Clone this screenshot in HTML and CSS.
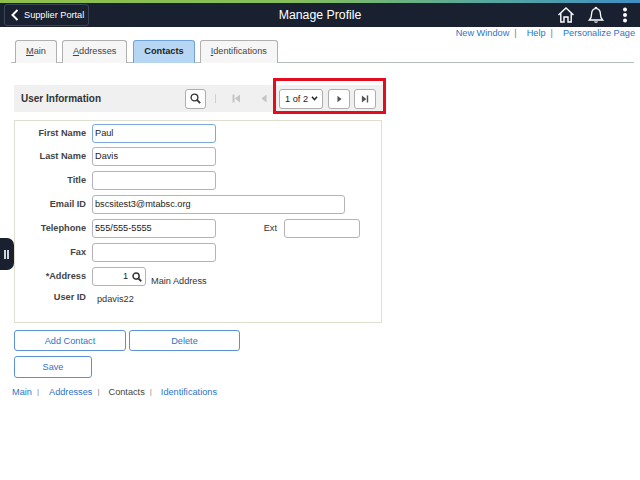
FILE: index.html
```html
<!DOCTYPE html>
<html lang="en">
<head>
<meta charset="utf-8">
<title>Manage Profile</title>
<link rel="stylesheet" href="styles.css">
</head>
<body>
<div class="strip"></div>
<header class="topbar">
  <div class="back-wrap">
    <a class="back">
      <svg class="chev" width="8" height="12" viewBox="0 0 8 12"><path d="M6.5 1 L1.5 6 L6.5 11" fill="none" stroke="#fff" stroke-width="2"/></svg>
      <span>Supplier Portal</span>
    </a>
  </div>
  <div class="title">Manage Profile</div>
  <div class="top-icons">
    <svg class="ic-home" width="18" height="18" viewBox="0 0 18 18"><path d="M1.5 9 L9 2 L16.5 9 M3.8 7.5 V16 H7 V11 H11 V16 H14.2 V7.5" fill="none" stroke="#fff" stroke-width="1.4"/></svg>
    <svg class="ic-bell" width="16" height="18" viewBox="0 0 16 18"><path d="M8 1.5 C8 1.5 8.8 1.5 8.8 2.6 C11.4 3.2 12.4 5.2 12.4 8 C12.4 11 13 12.4 14.6 14 H1.4 C3 12.4 3.6 11 3.6 8 C3.6 5.2 4.6 3.2 7.2 2.6 C7.2 1.5 8 1.5 8 1.5 Z" fill="none" stroke="#fff" stroke-width="1.3"/><path d="M6 15.5 C6.4 17.2 9.6 17.2 10 15.5 Z" fill="#fff"/></svg>
    <svg width="6" height="16" viewBox="0 0 6 16"><circle cx="3" cy="2.5" r="2" fill="#fff"/><circle cx="3" cy="8" r="2" fill="#fff"/><circle cx="3" cy="13.5" r="2" fill="#fff"/></svg>
  </div>
</header>
<nav class="links">
  <a>New Window</a><i>|</i><a>Help</a><i>|</i><a>Personalize Page</a>
</nav>
<div class="tabs">
  <div class="tab"><u>M</u>ain</div>
  <div class="tab"><u>A</u>ddresses</div>
  <div class="tab active">Contacts</div>
  <div class="tab"><u>I</u>dentifications</div>
</div>
<main class="content">
  <section class="scrollbar">
    <h2>User Information</h2>
    <div class="tools">
      <button class="iconbtn search">
        <svg width="11" height="11" viewBox="0 0 13 13"><circle cx="5.3" cy="5.3" r="4" fill="none" stroke="#333" stroke-width="1.6"/><path d="M8.2 8.2 L12 12" stroke="#333" stroke-width="2.2"/></svg>
      </button>
      <span class="sep"></span>
      <svg class="nav-first" width="9" height="9" viewBox="0 0 9 9"><rect x="0.5" y="0.5" width="2" height="8" fill="#c4c4c4"/><path d="M8 0.5 V8.5 L3 4.5 Z" fill="#c4c4c4"/></svg>
      <svg class="nav-prev" width="6" height="9" viewBox="0 0 6 9"><path d="M5.5 0.5 V8.5 L0.5 4.5 Z" fill="#c4c4c4"/></svg>
      <div class="select"><span>1 of 2</span>
        <svg width="7" height="5" viewBox="0 0 8 6"><path d="M1 1 L4 4.4 L7 1" fill="none" stroke="#222" stroke-width="1.8"/></svg>
      </div>
      <button class="iconbtn">
        <svg width="5" height="8" viewBox="0 0 6 9"><path d="M0.5 0.5 V8.5 L5.5 4.5 Z" fill="#555"/></svg>
      </button>
      <button class="iconbtn">
        <svg width="8" height="8" viewBox="0 0 9 9"><path d="M1 0.5 V8.5 L6 4.5 Z" fill="#555"/><rect x="6.5" y="0.5" width="1.6" height="8" fill="#555"/></svg>
      </button>
    </div>
    <div class="highlight"></div>
  </section>
  <section class="panel">
    <div class="row"><label>First Name</label><div class="input focus">Paul</div></div>
    <div class="row"><label>Last Name</label><div class="input">Davis</div></div>
    <div class="row"><label>Title</label><div class="input"></div></div>
    <div class="row"><label>Email ID</label><div class="input wide">bscsitest3@mtabsc.org</div></div>
    <div class="row"><label>Telephone</label><div class="input">555/555-5555</div><label class="ext">Ext</label><div class="input small"></div></div>
    <div class="row"><label>Fax</label><div class="input"></div></div>
    <div class="row"><label>*Address</label>
      <div class="input lookup"><span>1</span>
        <svg width="10" height="10" viewBox="0 0 13 13"><circle cx="5.3" cy="5.3" r="4" fill="none" stroke="#333" stroke-width="1.9"/><path d="M8.2 8.2 L12 12" stroke="#333" stroke-width="2.4"/></svg>
      </div>
      <span class="addr">Main Address</span>
    </div>
    <div class="row userid"><label>User ID</label><span class="val">pdavis22</span></div>
  </section>
  <div class="btns first"><button class="btn big">Add Contact</button><button class="btn big">Delete</button></div>
  <div class="btns"><button class="btn">Save</button></div>
</main>
<nav class="bottom">
  <a>Main</a><i>|</i><a>Addresses</a><i>|</i><span>Contacts</span><i>|</i><a>Identifications</a>
</nav>
<div class="handle"><b></b><b></b></div>
</body>
</html>
```
FILE: styles.css
```css
* { box-sizing: border-box; }
html, body { margin: 0; padding: 0; }
body { width: 640px; height: 480px; position: relative; overflow: hidden; background: #fff; font-family: "Liberation Sans", Arial, sans-serif; font-size: 9.2px; color: #333; }
.strip { height: 3px; background: linear-gradient(90deg, #8fc04a 0%, #86bf5a 45%, #58a89c 75%, #3f8fc4 100%); }
.topbar { height: 24px; background: #19202f; display: flex; align-items: center; justify-content: space-between; position: relative; padding: 0 12px 0 4px; }
.back-wrap { display: flex; }
.back { display: flex; align-items: center; gap: 5px; width: 85px; height: 22px; padding-left: 6px; border: 1px solid #3b4456; border-radius: 3px; color: #fff; font-size: 9.2px; white-space: nowrap; }
.title { position: absolute; left: 0; right: 0; text-align: center; color: #fff; font-size: 12.3px; top: 4px; line-height: 16px; pointer-events: none; }
.top-icons { display: flex; align-items: center; }
.ic-home { margin-right: 13px; }
.ic-bell { margin-right: 18px; }
.links { height: 13px; display: flex; justify-content: flex-end; padding-right: 5px; line-height: 12px; font-size: 9.2px; color: #2e74c9; }
.links a { color: #2e74c9; }
.links i { font-style: normal; color: #777; margin: 0 10px 0 5px; }
.tabs { display: flex; gap: 5px; margin: 0 6px 0 11px; padding: 0 0 0 4px; height: 23px; border-bottom: 1px solid #b5bcbc; }
.tab { height: 23px; padding: 0 10px; border: 1px solid #b0b0b0; border-bottom: none; border-radius: 3px 3px 0 0; background: #f6f6f6; color: #444; font-size: 9.2px; line-height: 21px; }
.tab u { text-decoration: underline; }
.tab.active { background: #b7d6f3; border-color: #6fa3d8; font-weight: bold; color: #222; margin-left: 1px; }
.content { padding: 22px 0 0 14px; }
.scrollbar { width: 371px; height: 27px; background: #f0f0f0; display: flex; align-items: center; justify-content: space-between; position: relative; padding: 0 9px 0 7px; }
.scrollbar h2 { margin: 0; font-size: 10px; font-weight: bold; color: #333; }
.tools { display: flex; align-items: center; height: 20px; }
.iconbtn { width: 22px; height: 20px; padding: 0; border: 1px solid #adadad; border-radius: 3px; background: #fff; display: flex; align-items: center; justify-content: center; margin-left: 5px; }
.iconbtn:last-child { margin-left: 4px; }
.search { margin-right: 9px; width: 21px; }
.sep { width: 1px; height: 9px; background: #d0d0d0; margin-right: 16px; }
.nav-first { margin-right: 20px; }
.nav-prev { margin-right: 12px; }
.select { width: 44px; height: 20px; border: 1px solid #adadad; border-radius: 3px; background: #fff; display: flex; align-items: center; justify-content: space-between; padding: 0 4px 0 5px; font-size: 9.2px; color: #222; white-space: nowrap; }
.highlight { position: absolute; left: 259px; top: -7px; width: 113px; height: 36px; border: 3px solid #e30d1d; pointer-events: none; }
.panel { width: 368px; height: 203px; margin-top: 8px; border: 1px solid #dedfcf; padding: 3px 0 0 0; }
.row { display: flex; align-items: flex-start; height: 24px; }
.row:first-child { height: 23px; }
.row label { width: 71px; margin-right: 6px; padding-top: 1px; text-align: right; font-weight: bold; font-size: 9.2px; color: #444; line-height: 16px; flex: none; }
.input { width: 124px; height: 19px; border: 1px solid #b3b3b9; border-radius: 3px; background: #fff; padding-left: 2px; font-size: 9.2px; line-height: 17px; color: #222; flex: none; }
.input.focus { border-color: #7ba9dd; }
.input.wide { width: 253px; }
.row .ext { width: 30px; margin-left: 31px; font-weight: normal; margin-right: 7px; color: #333; }
.input.small { width: 76px; }
.input.lookup { width: 54px; display: flex; align-items: center; justify-content: flex-end; gap: 4px; padding-right: 3px; }
.addr { margin-left: 5px; font-size: 9.2px; color: #333; line-height: 28px; }
.userid { margin-top: -3px; }
.val { margin-left: 5px; line-height: 18px; padding-top: 2px; color: #333; }
.btns { display: flex; gap: 3px; margin-top: 5px; }
.btns.first { margin-top: 7px; }
.btn { width: 78px; height: 22px; padding: 0; border: 1px solid #5b92d5; border-radius: 3px; background: #fff; color: #2e74c9; font: 9.2px "Liberation Sans", Arial, sans-serif; }
.btn.big { width: 112px; height: 21px; }
.btn.big + .btn.big { width: 111px; }
.bottom { margin: 7px 0 0 12px; display: flex; font-size: 9.2px; line-height: 14px; color: #444; }
.bottom a { color: #2e74c9; }
.bottom i { font-style: normal; color: #888; font-size: 8px; margin: 0 10px 0 5px; }
.bottom i ~ i { margin-right: 9px; }
.handle { position: absolute; left: 0; top: 238px; width: 14px; height: 32px; background: #19202f; border-radius: 0 7px 7px 0; display: flex; align-items: center; justify-content: center; gap: 1px; padding-right: 2px; }
.handle b { width: 2px; height: 9px; background: #cfd3da; }
```
